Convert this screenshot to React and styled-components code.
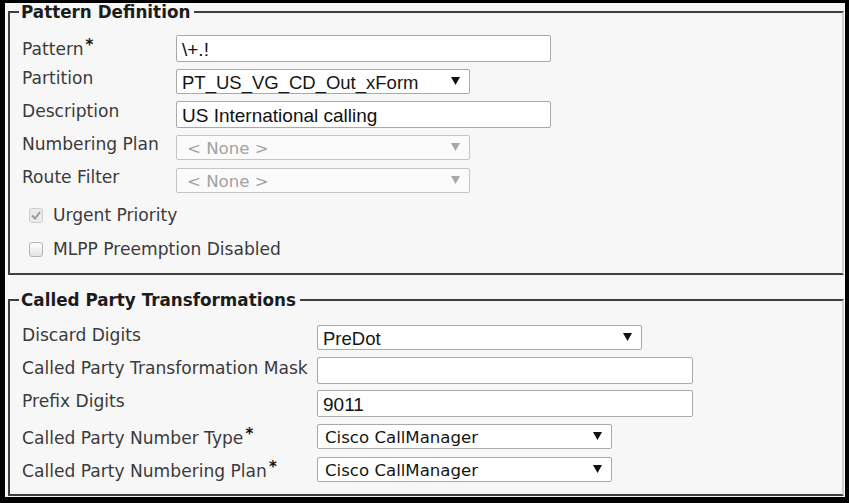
import React from 'react';
import styled, { createGlobalStyle } from 'styled-components';

const GlobalStyle = createGlobalStyle`
  html, body {
    margin: 0;
    padding: 0;
    background: #000;
  }
  * { box-sizing: border-box; }
`;

const Frame = styled.div`
  margin: 3px 4px 0 5px;
  height: 494px;
  padding: 0 0 0 3px;
  background: #f7f7f7;
  font-family: 'DejaVu Sans', Verdana, sans-serif;
`;

const Group = styled.fieldset`
  margin: ${p => p.$top}px 1px 0 0;
  padding: ${p => p.$pad};
  border: 2px solid #3e3e3e;
  border-right-color: #cfcfcf;
  min-width: 0;
`;

const Legend = styled.legend`
  margin-left: -3px;
  padding: 0 4px 0 2px;
  font: bold 16.8px/18px 'DejaVu Sans', Verdana, sans-serif;
  color: #1c1c1c;
`;

const Form = styled.div`
  display: grid;
  grid-template-columns: ${p => p.$label}px auto;
  grid-auto-rows: 27px;
  row-gap: 6px;
  justify-items: start;
  align-items: center;
`;

const Label = styled.div`
  align-self: start;
  padding-top: ${p => p.$pt ?? 0}px;
  font-size: 17.1px;
  line-height: 20px;
  color: #3b3a3c;
  white-space: nowrap;
`;

const Req = styled.span`
  font-size: 15px;
  font-weight: bold;
  color: #111;
  vertical-align: 5px;
  margin-left: 2px;
`;

const TextBox = styled.div`
  width: ${p => p.$w}px;
  height: 27px;
  border: 1px solid #a9a9a9;
  border-radius: 2px;
  background: #fff;
  padding: 3px 5px 0;
  font: 19px/22px 'Liberation Sans', Arial, sans-serif;
  color: #111;
  white-space: nowrap;
`;

const SelectBox = styled.div`
  width: ${p => p.$w}px;
  height: 25px;
  display: flex;
  justify-content: space-between;
  border: 1px solid ${p => (p.$disabled ? '#c4c4c4' : '#a9a9a9')};
  border-radius: 2px;
  background: ${p => (p.$disabled ? '#fbfbfb' : '#fff')};
  padding: 2px 9px 0 ${p => (p.$disabled ? 10 : p.$arial ? 5 : 7)}px;
  color: ${p => (p.$disabled ? '#a2a2a2' : '#151515')};
  font-family: ${p => (p.$arial ? "'Liberation Sans', Arial" : "'DejaVu Sans', Verdana")}, sans-serif;
  font-size: ${p => (p.$arial ? 18.5 : 16.6)}px;
  line-height: 21px;
  white-space: nowrap;
`;

const Arrow = styled.svg`
  flex: none;
  margin-top: 5px;
`;

const Checks = styled.div`
  display: flex;
  flex-direction: column;
  gap: 12px;
  margin-top: 10px;
  padding-left: 7px;
`;

const CheckRow = styled.div`
  display: flex;
  align-items: center;
  gap: 10px;
  height: 22px;
  font-size: 17.1px;
  color: #3b3a3c;
`;

const Box = styled.span`
  width: 14px;
  height: 15px;
  display: flex;
  align-items: center;
  justify-content: center;
  border: 1px solid ${p => (p.$checked ? '#cdcdcd' : '#b3b3b3')};
  border-radius: 3px;
  background: ${p => (p.$checked ? '#ebebeb' : 'linear-gradient(#ffffff, #e2e2e2)')};
`;

const Select = ({ w, value, disabled, arial }) => (
  <SelectBox $w={w} $disabled={disabled} $arial={arial}>
    <span>{value}</span>
    <Arrow width="9" height="8" viewBox="0 0 9 8">
      <polygon points="0,0 9,0 4.5,8" fill={disabled ? '#a8a8a8' : '#111'} />
    </Arrow>
  </SelectBox>
);

const Check = ({ checked, children }) => (
  <CheckRow>
    <Box $checked={checked}>
      {checked && (
        <svg width="10" height="9" viewBox="0 0 10 9">
          <path d="M1 4.5 L4 7.5 L9 1" fill="none" stroke="#9c9c9c" strokeWidth="2" />
        </svg>
      )}
    </Box>
    {children}
  </CheckRow>
);

export default function App() {
  return (
    <Frame>
      <GlobalStyle />
      <Group $top={0} $pad="14px 0 13px 12px">
        <Legend>Pattern Definition</Legend>
        <Form $label={154}>
          <Label>Pattern<Req>*</Req></Label>
          <TextBox $w={375}>\+.!</TextBox>
          <Label>Partition</Label>
          <Select w={294} value="PT_US_VG_CD_Out_xForm" arial />
          <Label>Description</Label>
          <TextBox $w={375}>US International calling</TextBox>
          <Label>Numbering Plan</Label>
          <Select w={294} value="< None >" disabled />
          <Label>Route Filter</Label>
          <Select w={294} value="< None >" disabled />
        </Form>
        <Checks>
          <Check checked>Urgent Priority</Check>
          <Check>MLPP Preemption Disabled</Check>
        </Checks>
      </Group>
      <Group $top={16} $pad="15px 0 11px 12px">
        <Legend>Called Party Transformations</Legend>
        <Form $label={295}>
          <Label $pt={1}>Discard Digits</Label>
          <Select w={325} value="PreDot" arial />
          <Label $pt={1}>Called Party Transformation Mask</Label>
          <TextBox $w={376} />
          <Label $pt={1}>Prefix Digits</Label>
          <TextBox $w={376}>9011</TextBox>
          <Label $pt={1}>Called Party Number Type<Req>*</Req></Label>
          <Select w={295} value="Cisco CallManager" />
          <Label $pt={1}>Called Party Numbering Plan<Req>*</Req></Label>
          <Select w={295} value="Cisco CallManager" />
        </Form>
      </Group>
    </Frame>
  );
}
